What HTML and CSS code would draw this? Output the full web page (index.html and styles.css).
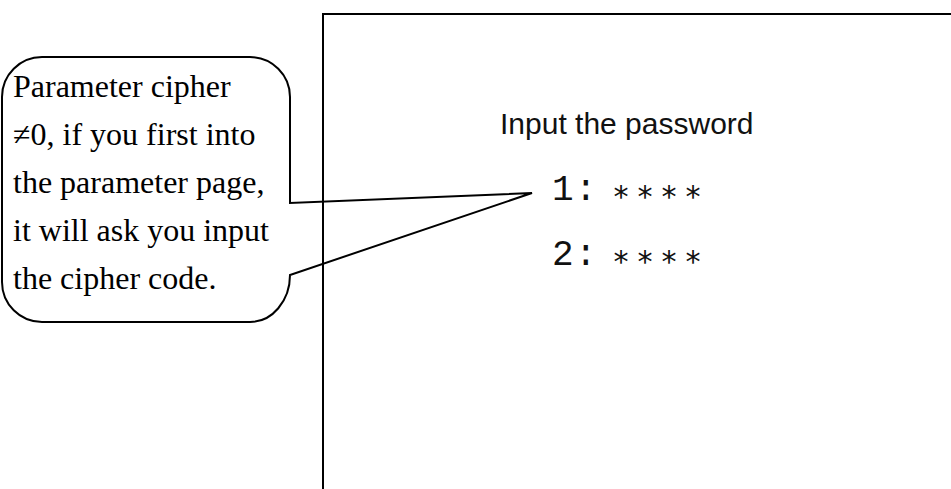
FILE: index.html
```html
<!DOCTYPE html>
<html lang="en">
<head>
  <meta charset="UTF-8">
  <title>Parameter Cipher</title>
  <link rel="stylesheet" href="styles.css">
</head>
<body>

<div class="page">
  <div class="note">
    <!-- callout outline with its tail pointing at the first code line -->
    <svg class="bubble" width="540" height="330" viewBox="0 0 540 330">
      <path d="M42 57 H250 A40 40 0 0 1 290 97 V203 L532 193 L290 275 A40 47 0 0 1 250 322 H42 A40 40 0 0 1 2 282 V97 A40 40 0 0 1 42 57 Z"
            fill="none" stroke="#000" stroke-width="2"/>
    </svg>
    <p class="note-text">Parameter cipher<br>&ne;0, if you first into<br>the parameter page,<br>it will ask you input<br>the cipher code.</p>
  </div>

  <div class="screen">
    <p class="prompt">Input the password</p>
    <div class="code-row">
      <span class="num">1</span><span class="colon">:</span>
      <span class="stars"><span>*</span><span>*</span><span>*</span><span>*</span></span>
    </div>
    <div class="code-row">
      <span class="num">2</span><span class="colon">:</span>
      <span class="stars"><span>*</span><span>*</span><span>*</span><span>*</span></span>
    </div>
  </div>
</div>

</body>
</html>
```

FILE: styles.css
```css
body {
  margin: 0;
  background: #fff;
  color: #000;
  overflow: hidden;
}

.page {
  display: flex;
  align-items: flex-start;
  height: 489px;
  overflow: hidden;
}

.note {
  position: relative;
  width: 322px;
  flex: none;
}

.bubble {
  position: absolute;
  top: 0;
  left: 0;
  overflow: visible;
  z-index: 2;
}

.note-text {
  margin: 0;
  padding: 62px 0 0 13px;
  font-family: "Liberation Serif", "Times New Roman", serif;
  font-size: 32px;
  line-height: 48px;
}

.screen {
  flex: 1;
  margin-top: 13px;
  height: 476px;
  border-top: 2px solid #000;
  border-left: 2px solid #000;
  padding-left: 176px;
  padding-top: 92px;
  box-sizing: border-box;
}

.prompt {
  margin: 0;
  font-family: "Liberation Sans", Arial, sans-serif;
  font-size: 30px;
  line-height: 34px;
  color: #111;
}

.code-row {
  display: flex;
  align-items: center;
  margin-left: 52px;
  height: 34px;
  margin-top: 32px;
  font-family: "Liberation Mono", "Courier New", monospace;
  font-size: 36px;
  color: #111;
}

.code-row + .code-row {
  margin-top: 31px;
}

.num {
  width: 23px;
}

.colon {
  width: 37px;
}

.stars {
  display: flex;
  gap: 10px;
  padding-top: 14px;
  font-family: "DejaVu Sans Mono", monospace;
  font-size: 30px;
  line-height: 30px;
}

.stars span {
  width: 14px;
  text-align: center;
}
```
